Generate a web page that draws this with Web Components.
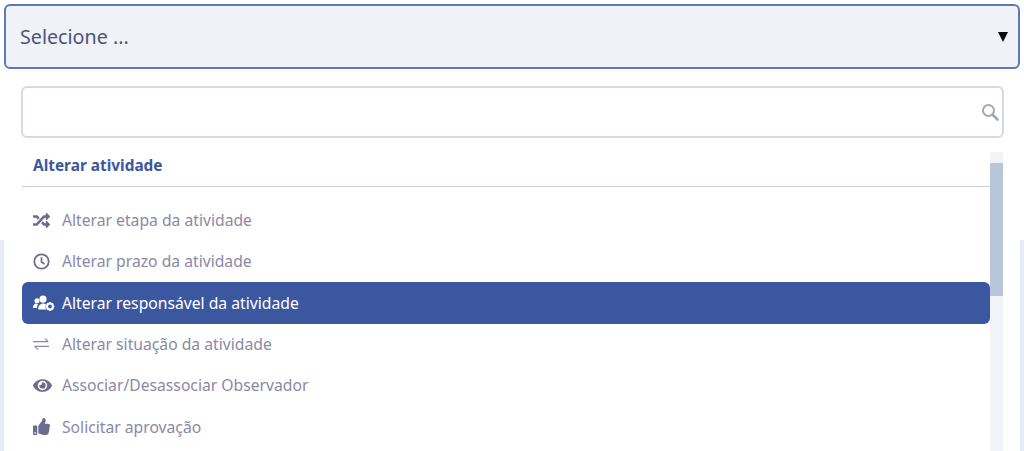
<!DOCTYPE html>
<html lang="pt"><head><meta charset="utf-8"><title>Selecione</title>
<style>
html,body{margin:0;height:451px;overflow:hidden}
body{font-family:"Noto Sans","Liberation Sans",sans-serif;background:linear-gradient(#fff 240px,#e8ebf3 240px)}
</style></head><body>
<x-select>
  <x-trigger>Selecione ...</x-trigger>
  <x-panel>
    <x-search></x-search>
    <x-list-wrap>
      <x-group label="Alterar atividade">
        <x-option icon="random">Alterar etapa da atividade</x-option>
        <x-option icon="clock">Alterar prazo da atividade</x-option>
        <x-option icon="userscog" selected>Alterar responsável da atividade</x-option>
        <x-option icon="exchange">Alterar situação da atividade</x-option>
        <x-option icon="eye">Associar/Desassociar Observador</x-option>
        <x-option icon="thumb">Solicitar aprovação</x-option>
      </x-group>
    </x-list-wrap>
  </x-panel>
</x-select>
<script>
const ICONS={
random:`<svg viewBox="0 0 512 512" width="17" height="17"><path fill="currentColor" d="M504.971 359.029c9.373 9.373 9.373 24.569 0 33.941l-80 79.984c-15.01 15.01-40.971 4.49-40.971-16.971V416h-58.785a12.004 12.004 0 0 1-8.773-3.812l-70.556-75.596 53.333-57.143L352 336h32v-39.981c0-21.438 25.943-31.998 40.971-16.971l80 79.981zM12 176h84l52.781 56.551 53.333-57.143-70.556-75.596A11.999 11.999 0 0 0 122.785 96H12c-6.627 0-12 5.373-12 12v56c0 6.627 5.373 12 12 12zm372 0v39.984c0 21.46 25.961 31.98 40.971 16.971l80-79.984c9.373-9.373 9.373-24.569 0-33.941l-80-79.981C409.943 24.021 384 34.582 384 56.019V96h-58.785a12.004 12.004 0 0 0-8.773 3.812L96 336H12c-6.627 0-12 5.373-12 12v56c0 6.627 5.373 12 12 12h110.785c3.326 0 6.503-1.381 8.773-3.812L352 176h32z"/></svg>`,
clock:`<svg viewBox="0 0 17 17" width="17" height="17"><circle cx="8.5" cy="8.5" r="7.2" fill="none" stroke="currentColor" stroke-width="1.8"/><path d="M8.5 4.2V9l3 2" fill="none" stroke="currentColor" stroke-width="1.7"/></svg>`,
userscog:`<svg viewBox="0 0 22 17" width="22" height="18"><g fill="currentColor"><circle cx="4" cy="6.2" r="2.5"/><circle cx="10" cy="4.6" r="3.6"/><path d="M0 13.500c0-2.800 1.200-4.500 3-4.500 1 0 1.600.4 2 .9C4.300 10.800 4 12 4 13.500z"/><path d="M5.200 15c0-4 2-6.100 4.800-6.100 1.400 0 2.400.4 3.200 1.100-1 1.300-.8 3.700 0 5z"/></g><circle cx="17" cy="12" r="2.900" fill="none" stroke="currentColor" stroke-width="2"/><path d="M17 7.500v2M17 14.500v2M12.600 12h2M19.400 12h2M13.900 8.900l1.400 1.400M18.700 13.700l1.400 1.400M20.100 8.900l-1.400 1.400M15.300 13.700l-1.400 1.400" stroke="currentColor" stroke-width="1.700"/></svg>`,
exchange:`<svg viewBox="0 0 18 14" width="17" height="14"><path d="M0 4.500h16M12.500 1l3.700 3.500M17 9.500H1.500M5.500 13L1.800 9.500" fill="none" stroke="#8b89a6" stroke-width="1.200"/></svg>`,
eye:`<svg viewBox="0 0 576 512" width="19" height="17"><path fill="currentColor" d="M572.52 241.4C518.29 135.59 410.93 64 288 64S57.68 135.64 3.48 241.41a32.35 32.35 0 0 0 0 29.19C57.71 376.41 165.07 448 288 448s230.32-71.64 284.52-177.41a32.35 32.35 0 0 0 0-29.19zM288 400a144 144 0 1 1 144-144 143.93 143.93 0 0 1-144 144zm0-240a95.31 95.31 0 0 0-25.31 3.79 47.85 47.85 0 0 1-66.9 66.9A95.78 95.78 0 1 0 288 160z"/></svg>`,
thumb:`<svg viewBox="0 0 512 512" width="17" height="17"><path fill="currentColor" d="M104 224H24c-13.255 0-24 10.745-24 24v240c0 13.255 10.745 24 24 24h80c13.255 0 24-10.745 24-24V248c0-13.255-10.745-24-24-24zM64 472c-13.255 0-24-10.745-24-24s10.745-24 24-24 24 10.745 24 24-10.745 24-24 24zM384 81.452c0 42.416-25.97 66.208-33.277 94.548h101.723c33.397 0 59.397 27.746 59.553 58.098.084 17.938-7.546 37.249-19.439 49.197l-.11.11c9.836 23.337 8.237 56.037-9.308 79.469 8.681 25.895-.069 57.704-16.382 74.757 4.298 17.598 2.244 32.575-6.148 44.632C440.202 511.587 389.616 512 346.839 512l-2.845-.001c-48.287-.017-87.806-17.598-119.56-31.725-15.957-7.099-36.821-15.887-52.651-16.178-6.54-.12-11.783-5.457-11.783-11.998v-213.77c0-3.2 1.282-6.271 3.558-8.521 39.614-39.144 56.648-80.587 89.117-113.111 14.804-14.832 20.188-37.236 25.393-58.902C282.515 39.293 291.817 0 312 0c24 0 72 8 72 81.452z"/></svg>`
};
function def(name,css,html){
  customElements.define(name,class extends HTMLElement{
    constructor(){super();const s=this.attachShadow({mode:"open"});
      s.innerHTML=`<style>${css}</style>${typeof html==="function"?"":html}`;}
    connectedCallback(){
      if(typeof html==="function")this.shadowRoot.innerHTML=`<style>${css}</style>${html(this)}`;}
  });
}
def("x-select",`:host{display:block;padding:4px 4px 0}`,`<slot></slot>`);
def("x-trigger",`:host{display:flex;align-items:center;justify-content:space-between;box-sizing:border-box;height:65px;padding:0 10px 0 14px;background:#f0f2f7;border:2px solid #5f78ba;border-radius:6px;font-size:19.7px;color:#4d5478}
.a{width:0;height:0;border-left:5px solid transparent;border-right:5px solid transparent;border-top:10px solid #0a0a14}`,`<span><slot></slot></span><span class="a"></span>`);
def("x-panel",`:host{display:block;background:#fff;padding:17px 16px 0 17px;height:383px;box-sizing:border-box}`,`<slot></slot>`);
def("x-search",`:host{display:flex;align-items:center;justify-content:flex-end;box-sizing:border-box;height:52px;padding-right:3px;border:2px solid #d6d9e8;border-radius:6px;color:#a3a6b3}`,
`<svg viewBox="0 0 18 18" width="18" height="18"><circle cx="7.500" cy="7.500" r="5.500" fill="none" stroke="currentColor" stroke-width="2"/><path d="M11.500 11.500l5 5" stroke="currentColor" stroke-width="2.600" stroke-linecap="round"/></svg>`);
def("x-list-wrap",`:host{display:flex;margin:14px 1px 0}
.l{flex:1;min-width:0}
.s{flex:none;width:13px;height:300px;background:#f1f3f8;padding-top:11px;box-sizing:border-box}
.t{height:133px;background:#b9c6da}`,`<div class="l"><slot></slot></div><div class="s"><div class="t"></div></div>`);
def("x-group",`:host{display:block}
.h{box-sizing:border-box;height:35px;padding:3px 0 0 11px;font-size:15.4px;font-weight:700;color:#3b579f;border-bottom:1px solid #c9cfe2;line-height:22px}
.b{padding-top:12.4px;display:flex;flex-direction:column}`,
h=>`<div class="h">${h.getAttribute("label")}</div><div class="b"><slot></slot></div>`);
def("x-option",`:host{display:flex;align-items:center;box-sizing:border-box;height:41.3px;padding-left:11px;border-radius:6px;font-size:15.7px;color:#8b89a6}
:host([selected]){background:#3b57a0;color:#fff;height:42px;margin-bottom:-.7px}
.i{flex:none;width:29px;display:flex;align-items:center;color:#6c6c8e}
:host([selected]) .i{color:#fff}`,
h=>`<span class="i">${ICONS[h.getAttribute("icon")]}</span><span><slot></slot></span>`);
</script>
</body></html>
